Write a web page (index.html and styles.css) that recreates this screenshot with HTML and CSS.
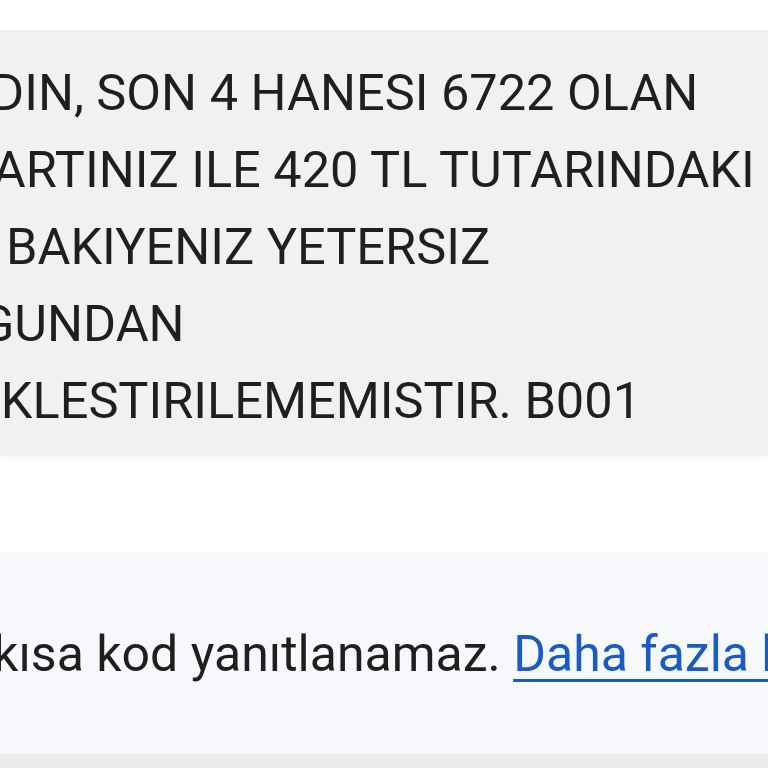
FILE: index.html
```html
<!DOCTYPE html>
<html lang="tr">
<head>
<meta charset="utf-8">
<link rel="stylesheet" href="styles.css">
</head>
<body>
<div class="page">
  <div class="bubble">
    <div class="line l1">DIN, SON 4 HANESI 6722 OLAN</div>
    <div class="line l2">KARTINIZ ILE 420 TL TUTARINDAKI</div>
    <div class="line l3">BAKIYENIZ YETERSIZ</div>
    <div class="line l4">DUGUNDAN</div>
    <div class="line l5">GERCEKLESTIRILEMEMISTIR. B001</div>
  </div>
  <div class="notice">
    <span class="notice-text">Bu kısa kod yanıtlanamaz. <a class="link" href="#">Daha fazla bilgi edinin</a></span>
  </div>
  <div class="strip"></div>
</div>
</body>
</html>
```
FILE: styles.css
```css
html, body {
  margin: 0;
  padding: 0;
  background: #ffffff;
}
body {
  width: 768px;
  height: 768px;
  overflow: hidden;
  font-family: Roboto, "Noto Sans", sans-serif;
  color: #1f1f1f;
}
.page {
  padding-top: 30px;
  display: flex;
  flex-direction: column;
}
.bubble {
  background: #f1f1f1;
  height: 426px;
  box-sizing: border-box;
  padding-top: 24px;
  overflow: hidden;
  box-shadow: 0 3px 4px rgba(0,0,0,0.03);
}
.line {
  font-size: 50.5px;
  line-height: 77px;
  white-space: nowrap;
}
.l1 { margin-left: -9px; }
.l2 { margin-left: -39px; }
.l3 { margin-left: 6px; }
.l4 { margin-left: -86px; }
.l5 { margin-left: -155px; }
.notice {
  margin-top: 96px;
  height: 202px;
  background: #f7f8fc;
  display: flex;
  align-items: center;
  overflow: hidden;
}
.notice-text {
  font-size: 50px;
  white-space: nowrap;
  margin-left: -78px;
  padding-top: 2px;
}
.link {
  color: #1a5cc2;
  text-decoration: underline;
  text-decoration-thickness: 3px;
  text-underline-offset: 8px;
}
.strip {
  height: 14px;
  background: #ebebeb;
}
```
